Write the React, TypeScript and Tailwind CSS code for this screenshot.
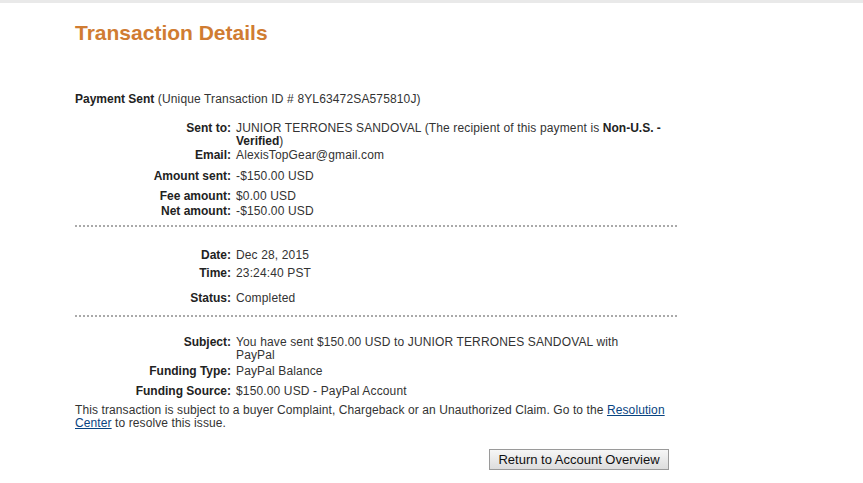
import React from "react";

function Row({
  label,
  children,
  className = "",
}: {
  label: string;
  children: React.ReactNode;
  className?: string;
}) {
  return (
    <div className={`flex ${className}`}>
      <div className="w-[156px] shrink-0 text-right font-bold tracking-normal text-[#222]">{label}</div>
      <div className="ml-[5px] whitespace-nowrap tracking-[0.14px]">{children}</div>
    </div>
  );
}

export default function App() {
  return (
    <div
      className="min-h-[483px] w-full bg-white text-[12px] leading-[14px] text-[#333]"
      style={{ fontFamily: '"Liberation Sans", Arial, Helvetica, sans-serif' }}
    >
      <div className="h-[3px] w-full bg-[#e9e9e9]" />
      <div className="ml-[75px] w-[602px]">
        <h1 className="mt-[18px] text-[21px] font-bold leading-[24px] text-[#d07c32]">
          Transaction Details
        </h1>
        <div className="mt-[47px] tracking-[0.14px]">
          <span className="font-bold tracking-normal text-[#222]">Payment Sent</span> (Unique Transaction ID # 8YL63472SA575810J)
        </div>

        <Row label="Sent to:" className="mt-[16px] leading-[13px]">
          JUNIOR TERRONES SANDOVAL (The recipient of this payment is{" "}
          <span className="font-bold tracking-normal text-[#222]">Non-U.S. -</span>
          <br />
          <span className="font-bold tracking-normal text-[#222]">Verified</span>)
        </Row>
        <Row label="Email:" className="mt-[0px]">
          AlexisTopGear@gmail.com
        </Row>
        <Row label="Amount sent:" className="mt-[7px]">
          -$150.00 USD
        </Row>
        <Row label="Fee amount:" className="mt-[6px]">
          $0.00 USD
        </Row>
        <Row label="Net amount:" className="mt-[1px]">
          -$150.00 USD
        </Row>

        <div className="mt-[7px] border-t-2 border-dotted border-[#aaaaaa]" />

        <Row label="Date:" className="mt-[21px]">
          Dec 28, 2015
        </Row>
        <Row label="Time:" className="mt-[4px]">
          23:24:40 PST
        </Row>
        <Row label="Status:" className="mt-[11px]">
          Completed
        </Row>

        <div className="mt-[10px] border-t-2 border-dotted border-[#aaaaaa]" />

        <Row label="Subject:" className="mt-[19px] leading-[13px]">
          You have sent $150.00 USD to JUNIOR TERRONES SANDOVAL with
          <br />
          PayPal
        </Row>
        <Row label="Funding Type:" className="mt-[2px]">
          PayPal Balance
        </Row>
        <Row label="Funding Source:" className="mt-[6px]">
          $150.00 USD - PayPal Account
        </Row>

        <p className="mt-[6px] whitespace-nowrap leading-[13px] tracking-[0.1px]">
          This transaction is subject to a buyer Complaint, Chargeback or an Unauthorized Claim. Go to the{" "}
          <a href="#" className="text-[#084482] underline">
            Resolution
            <br />
            Center
          </a>{" "}
          to resolve this issue.
        </p>

        <div className="mt-[19px] flex justify-end pr-[8px]">
          <button
            type="button"
            className="h-[21px] w-[180px] border border-[#9a9a9a] bg-gradient-to-b from-[#f6f6f6] to-[#dddddd] text-[13px] leading-[19px] text-[#111]"
            style={{ fontFamily: '"Liberation Sans", Arial, sans-serif' }}
          >
            Return to Account Overview
          </button>
        </div>
      </div>
    </div>
  );
}
